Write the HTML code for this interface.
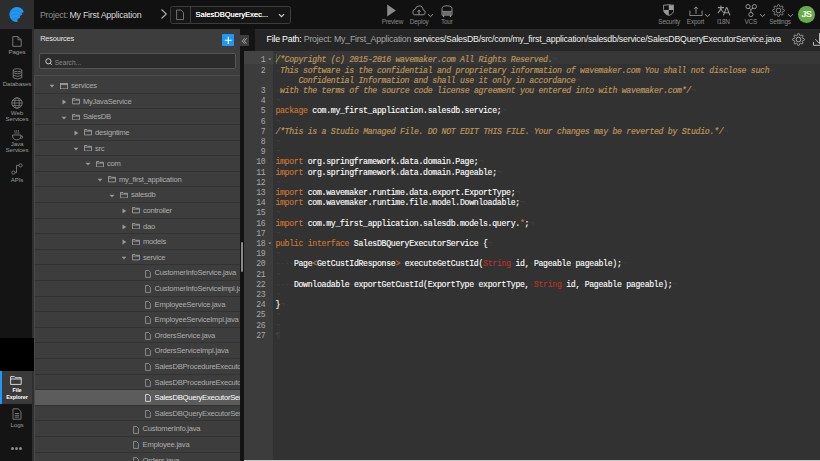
<!DOCTYPE html><html><head><meta charset="utf-8"><style>
*{margin:0;padding:0;box-sizing:border-box}
html,body{width:820px;height:461px;overflow:hidden;background:#323232;font-family:"Liberation Sans",sans-serif}
.a{position:absolute}
.t{position:absolute;white-space:pre;line-height:1}
#top{left:0;top:0;width:820px;height:28.8px;background:#111}
#logo{left:0;top:0;width:34px;height:28.8px;background:#2d2d2d}
#nav{left:0;top:28.8px;width:31.6px;height:433px;background:#141414}
#navstrip{left:31.6px;top:28.8px;width:2.7px;height:433px;background:#303030}
#panel{left:34px;top:28.8px;width:205.7px;height:433px;background:#3d3d3d}
#split{left:239.7px;top:28.8px;width:4.1px;height:433px;background:#121212}
#hdrdark{left:239.7px;top:28.8px;width:15px;height:22.2px;background:#141414}
#hdr{left:254.5px;top:28.8px;width:566px;height:22.2px;background:#262626}
#editor{left:243.8px;top:51px;width:577px;height:410px;background:#323232}
#gutter{left:243.8px;top:51px;width:29.2px;height:410px;background:#3c3c3c}
.nl{color:#9a9a9a;font-size:6.2px;letter-spacing:-0.12px;text-align:center;width:34px;left:0}
.tl{color:#8a8a8a;font-size:6.4px;letter-spacing:-0.18px}
.row{position:absolute;left:34.5px;width:205.2px;height:15.6px;border-bottom:0.8px solid #323232;overflow:hidden}
.row .tx{position:absolute;top:-0.1px;line-height:15.6px;font-size:7.6px;letter-spacing:-0.23px;color:#adadad;white-space:pre}
.row.sel{background:#5c5c5c}
.row.sel .tx{color:#fff}
.code{position:absolute;left:275.4px;-webkit-text-stroke:0.12px currentColor;font-family:"Liberation Mono",monospace;font-size:8.2px;letter-spacing:-0.3px;line-height:10.2px;white-space:pre;color:#fff}
.gn{position:absolute;white-space:pre;left:243.8px;width:21.7px;text-align:right;font-family:"Liberation Mono",monospace;font-size:8.2px;letter-spacing:-0.3px;line-height:10.2px;color:#a8a8a8}
.cm{color:#BC9458;font-style:italic;-webkit-text-stroke:0.2px #BC9458}
.kw{color:#CC7833}
.sf{color:#B83426}
.iv{color:#444;font-style:normal;-webkit-text-stroke:0}
</style></head><body>
<div id="top" class="a"></div>
<div id="logo" class="a"></div>
<div id="nav" class="a"></div>
<div id="navstrip" class="a"></div>
<div id="panel" class="a"></div>
<div id="split" class="a"></div>
<div id="hdrdark" class="a"></div>
<div id="hdr" class="a"></div>
<div id="editor" class="a"></div>
<div id="gutter" class="a"></div>
<div class="a" style="left:244px;top:460px;width:576px;height:1px;background:#c4c4c4"></div>
<svg class="a" style="left:0;top:0" width="34" height="29" viewBox="0 0 34 29">
<path d="M23.9 11.9 A7.5 7.5 0 1 0 17.4 22 L17.5 18.9 L20.3 17.4 L19.8 16 L22.4 14.6 L21.4 13.2 Z" fill="#2196f3"/>
<path d="M9.8 12.6 Q15.5 8.2 21.4 13.2" stroke="#1a84dc" stroke-width="0.8" fill="none"/>
<path d="M10.6 16.4 Q15.5 12 19.8 16" stroke="#1a84dc" stroke-width="0.8" fill="none"/>
<path d="M12.4 19.6 Q15.5 16.4 17.5 18.9" stroke="#1a84dc" stroke-width="0.8" fill="none"/>
</svg>
<div class="t" style="left:39.9px;top:10.8px;font-size:8.9px;letter-spacing:-0.25px;color:#8d8d8d">Project: <span style="color:#d6d6d6;margin-left:-0.8px">My First Application</span></div>
<svg class="a" style="left:159px;top:8px" width="10" height="12" viewBox="0 0 10 12"><path d="M2.5 1.5 L7.3 6 L2.5 10.5" stroke="#a8a8a8" stroke-width="1.2" fill="none"/></svg>
<div class="a" style="left:170.4px;top:6.3px;width:120.3px;height:17.3px;border:0.8px solid #3d3d3d;border-radius:2.5px;background:#161616"></div>
<div class="a" style="left:190px;top:6.5px;width:0.8px;height:17px;background:#3d3d3d"></div>
<svg class="a" style="left:175px;top:9px" width="10" height="12" viewBox="0 0 10 12"><path d="M1.6 1 H6 L8.5 3.5 V10.6 H1.6 Z" stroke="#8a8a8a" stroke-width="0.8" fill="none"/></svg>
<div class="t" style="left:195.5px;top:11.2px;font-size:7.5px;color:#f4f4f4;text-shadow:0.1px 0 0 #f4f4f4">SalesDBQueryExec...</div>
<svg class="a" style="left:277px;top:11.8px" width="9" height="7" viewBox="0 0 9 7"><path d="M1.9 2.1 L4.5 4.7 L7.1 2.1" stroke="#d0d0d0" stroke-width="1.15" fill="none"/></svg>
<svg class="a" style="left:386px;top:4px" width="11" height="13" viewBox="0 0 11 13"><path d="M1.2 0.6 L9.9 6.5 L1.2 12.4 Z" fill="#8a8a8a"/></svg>
<div class="t tl" style="left:377.4px;width:30px;text-align:center;top:18.5px">Preview</div>
<svg class="a" style="left:412.2px;top:4.6px" width="14" height="11" viewBox="0 0 14 11"><path d="M2.6 9.8 H11 Q13.2 9.8 13.2 7.4 Q13.2 5.2 11.2 5 Q10.8 0.9 7.1 0.9 Q4 0.9 3.3 4.1 Q0.8 4.6 0.8 7.2 Q0.8 9.8 2.6 9.8 Z" stroke="#9a9a9a" stroke-width="0.9" fill="none"/><path d="M7 9.6 V5.2 M5.5 6.6 L7 5.1 L8.5 6.6" stroke="#9a9a9a" stroke-width="1" fill="none"/></svg>
<svg class="a" style="left:427.3px;top:13.4px" width="7" height="5" viewBox="0 0 7 5"><path d="M1 1.2 L3.5 3.6 L6 1.2" stroke="#aaa" stroke-width="0.9" fill="none"/></svg>
<div class="t tl" style="left:404.2px;width:30px;text-align:center;top:18.5px">Deploy</div>
<svg class="a" style="left:440.8px;top:4.6px" width="12" height="13" viewBox="0 0 12 13"><path d="M1 10.2 V3.6 Q1 0.8 6 0.8 Q11 0.8 11 3.6 V10.2 Z" stroke="#9a9a9a" stroke-width="0.9" fill="none"/><path d="M1 6.4 H11" stroke="#9a9a9a" stroke-width="0.9"/><rect x="1.4" y="6.8" width="9.2" height="3.2" fill="#6e6e6e"/><path d="M2.6 10.2 V12 M9.4 10.2 V12" stroke="#9a9a9a" stroke-width="1.2"/></svg>
<div class="t tl" style="left:431.8px;width:30px;text-align:center;top:18.5px">Tour</div>
<svg class="a" style="left:662.5px;top:4.2px" width="11.5" height="12" viewBox="0 0 11.5 12"><path d="M5.75 0.6 Q8.6 1.3 10.9 1.1 V5.6 Q10.9 9.8 5.75 11.5 Q0.6 9.8 0.6 5.6 V1.1 Q2.9 1.3 5.75 0.6 Z" stroke="#9a9a9a" stroke-width="0.9" fill="none"/><path d="M5.75 0.8 Q8.6 1.5 10.7 1.3 V5.9 H5.75 Z" fill="#9a9a9a"/><path d="M0.8 5.9 H5.75 V11.3 Q1.2 9.6 0.8 5.9 Z" fill="#9a9a9a"/></svg>
<div class="t tl" style="left:654.2px;width:30px;text-align:center;top:18.5px">Security</div>
<svg class="a" style="left:688.6px;top:5.8px" width="14" height="10.5" viewBox="0 0 14 10.5"><path d="M0.9 4.6 V9.6 H13.1 V4.6" stroke="#9a9a9a" stroke-width="0.9" fill="none"/><path d="M7 7.8 V0.9 M5 2.9 L7 0.9 L9 2.9" stroke="#9a9a9a" stroke-width="0.9" fill="none"/></svg>
<svg class="a" style="left:704px;top:13.4px" width="7" height="5" viewBox="0 0 7 5"><path d="M1 1.2 L3.5 3.6 L6 1.2" stroke="#aaa" stroke-width="0.9" fill="none"/></svg>
<div class="t tl" style="left:680.5px;width:30px;text-align:center;top:18.5px">Export</div>
<svg class="a" style="left:716.5px;top:4.8px" width="14" height="11" viewBox="0 0 14 11"><path d="M0.8 2.6 H7 M3.9 0.6 V2.6 Q3.6 6 0.8 8.2 M3.9 3.6 Q4.8 6.2 6.8 7.6" stroke="#9a9a9a" stroke-width="1.05" fill="none"/><path d="M6.4 10.4 L9.3 2.8 H10 L13 10.4 M7.6 7.8 H11.8" stroke="#9a9a9a" stroke-width="1.05" fill="none"/></svg>
<div class="t tl" style="left:708.3px;width:30px;text-align:center;top:18.5px">I18N</div>
<svg class="a" style="left:744px;top:3.5px" width="14" height="14" viewBox="0 0 14 14"><circle cx="4" cy="2.6" r="2.1" stroke="#9a9a9a" stroke-width="0.95" fill="none"/><circle cx="10.4" cy="2.6" r="2.1" stroke="#9a9a9a" stroke-width="0.95" fill="none"/><circle cx="6.9" cy="10.5" r="2.1" stroke="#9a9a9a" stroke-width="0.95" fill="none"/><path d="M5.3 4.2 L6.9 5.6 L9.1 4.2 M6.9 5.6 V8.4" stroke="#9a9a9a" stroke-width="0.95" fill="none"/></svg>
<svg class="a" style="left:759.2px;top:13.4px" width="7" height="5" viewBox="0 0 7 5"><path d="M1 1.2 L3.5 3.6 L6 1.2" stroke="#aaa" stroke-width="0.9" fill="none"/></svg>
<div class="t tl" style="left:735.8px;width:30px;text-align:center;top:18.5px">VCS</div>
<svg class="a" style="left:772.2px;top:3.8px" width="13" height="13" viewBox="0 0 13 13"><path d="M12.40 6.50 L12.37 6.88 L12.20 7.25 L11.45 7.49 L10.70 7.63 L10.49 7.86 L10.38 8.11 L10.28 8.36 L10.27 8.68 L10.70 9.31 L11.06 10.00 L10.92 10.38 L10.67 10.67 L10.38 10.92 L10.00 11.06 L9.31 10.70 L8.68 10.27 L8.36 10.28 L8.11 10.38 L7.86 10.49 L7.63 10.70 L7.49 11.45 L7.25 12.20 L6.88 12.37 L6.50 12.40 L6.12 12.37 L5.75 12.20 L5.51 11.45 L5.37 10.70 L5.14 10.49 L4.89 10.38 L4.64 10.28 L4.32 10.27 L3.69 10.70 L3.00 11.06 L2.62 10.92 L2.33 10.67 L2.08 10.38 L1.94 10.00 L2.30 9.31 L2.73 8.68 L2.72 8.36 L2.62 8.11 L2.51 7.86 L2.30 7.63 L1.55 7.49 L0.80 7.25 L0.63 6.88 L0.60 6.50 L0.63 6.12 L0.80 5.75 L1.55 5.51 L2.30 5.37 L2.51 5.14 L2.62 4.89 L2.72 4.64 L2.73 4.32 L2.30 3.69 L1.94 3.00 L2.08 2.62 L2.33 2.33 L2.62 2.08 L3.00 1.94 L3.69 2.30 L4.32 2.73 L4.64 2.72 L4.89 2.62 L5.14 2.51 L5.37 2.30 L5.51 1.55 L5.75 0.80 L6.12 0.63 L6.50 0.60 L6.88 0.63 L7.25 0.80 L7.49 1.55 L7.63 2.30 L7.86 2.51 L8.11 2.62 L8.36 2.72 L8.68 2.73 L9.31 2.30 L10.00 1.94 L10.38 2.08 L10.67 2.33 L10.92 2.62 L11.06 3.00 L10.70 3.69 L10.27 4.32 L10.28 4.64 L10.38 4.89 L10.49 5.14 L10.70 5.37 L11.45 5.51 L12.20 5.75 L12.37 6.12Z" stroke="#9a9a9a" stroke-width="0.9" fill="none" stroke-linejoin="round"/><circle cx="6.5" cy="6.5" r="2.3" stroke="#9a9a9a" stroke-width="0.9" fill="none"/></svg>
<svg class="a" style="left:786.8px;top:13.4px" width="7" height="5" viewBox="0 0 7 5"><path d="M1 1.2 L3.5 3.6 L6 1.2" stroke="#aaa" stroke-width="0.9" fill="none"/></svg>
<div class="t tl" style="left:765.0px;width:30px;text-align:center;top:18.5px">Settings</div>
<div class="a" style="left:798.2px;top:6.3px;width:16.4px;height:16.4px;border-radius:50%;background:#66ad48"></div>
<div class="t" style="left:798.4px;top:10.35px;width:16.4px;text-align:center;font-size:8.8px;letter-spacing:-0.2px;color:#fff;text-shadow:0.15px 0 0 #fff">JS</div>
<svg class="a" style="left:12px;top:35.6px" width="10" height="11" viewBox="0 0 10 11"><path d="M0.8 0.6 H6 L9.2 3.8 V10.3 H0.8 Z M6 0.6 V3.8 H9.2" stroke="#7e7e7e" stroke-width="0.95" fill="none"/></svg>
<div class="t nl" style="top:48.599999999999994px">Pages</div>
<svg class="a" style="left:11.5px;top:67.5px" width="11" height="12" viewBox="0 0 11 12"><ellipse cx="5.5" cy="2.2" rx="4.3" ry="1.5" stroke="#7e7e7e" stroke-width="0.9" fill="none"/><path d="M1.2 2.2 V9.8 Q5.5 12.2 9.8 9.8 V2.2 M1.2 4.8 Q5.5 7 9.8 4.8 M1.2 7.3 Q5.5 9.5 9.8 7.3" stroke="#7e7e7e" stroke-width="0.9" fill="none"/></svg>
<div class="t nl" style="top:80.7px">Databases</div>
<svg class="a" style="left:11px;top:96.7px" width="12" height="12" viewBox="0 0 12 12"><circle cx="6" cy="6" r="5.2" stroke="#7e7e7e" stroke-width="0.9" fill="none"/><ellipse cx="6" cy="6" rx="2.3" ry="5.2" stroke="#7e7e7e" stroke-width="0.8" fill="none"/><path d="M0.8 6 H11.2 M1.6 3.4 H10.4 M1.6 8.6 H10.4" stroke="#7e7e7e" stroke-width="0.8"/></svg>
<div class="t nl" style="top:110.2px">Web</div>
<div class="t nl" style="top:116.1px">Services</div>
<svg class="a" style="left:10.5px;top:128.5px" width="13" height="12" viewBox="0 0 13 12"><path d="M1.5 6 H10 Q10 10.8 5.7 10.8 Q1.5 10.8 1.5 6 Z M10 7 Q12.3 7 11.6 8.6 Q11 9.4 9.3 9.2" stroke="#7e7e7e" stroke-width="0.9" fill="none"/><path d="M4 1 Q3.4 2 4 3 Q4.6 4 4 5 M5.8 1 Q5.2 2 5.8 3 Q6.4 4 5.8 5 M7.6 1 Q7 2 7.6 3 Q8.2 4 7.6 5" stroke="#7e7e7e" stroke-width="0.7" fill="none"/></svg>
<div class="t nl" style="top:141.20000000000002px">Java</div>
<div class="t nl" style="top:147.4px">Services</div>
<svg class="a" style="left:11px;top:163px" width="12" height="12" viewBox="0 0 12 12"><circle cx="9.5" cy="2.4" r="1.6" stroke="#7e7e7e" stroke-width="0.9" fill="none"/><circle cx="2.4" cy="9.6" r="1.6" stroke="#7e7e7e" stroke-width="0.9" fill="none"/><path d="M4 9.6 H5.5 V2.4 H7.9" stroke="#7e7e7e" stroke-width="0.9" fill="none"/></svg>
<div class="t nl" style="top:177.0px">APIs</div>
<div class="a" style="left:0;top:338.4px;width:34px;height:32.6px;background:#000"></div>
<div class="a" style="left:0;top:371px;width:31.6px;height:32.5px;background:#3a3a3a"></div>
<div class="a" style="left:0;top:371px;width:1.5px;height:32.5px;background:#2196f3"></div>
<svg class="a" style="left:10.2px;top:376.2px" width="12" height="9" viewBox="0 0 12 9"><path d="M0.6 0.6 H4.4 L5.3 1.7 H11.2 V8.4 H0.6 Z M0.6 3 H11.2" stroke="#e8e8e8" stroke-width="0.9" fill="none"/></svg>
<div class="t nl" style="top:388.40000000000003px;color:#fff;font-weight:bold;font-size:5.5px">File</div>
<div class="t nl" style="top:394.7px;color:#fff;font-weight:bold;font-size:5.5px">Explorer</div>
<svg class="a" style="left:12px;top:407.5px" width="10" height="12" viewBox="0 0 10 12"><path d="M1 0.8 H6.2 L9 3.6 V11.2 H1 Z M2.8 5.5 H7.2 M2.8 7.3 H7.2 M2.8 9.1 H7.2" stroke="#7e7e7e" stroke-width="0.9" fill="none"/></svg>
<div class="t nl" style="top:421.8px">Logs</div>
<div class="a" style="left:10.700000000000001px;top:446.5px;width:3.2px;height:3.2px;border-radius:50%;background:#8a8a8a"></div>
<div class="a" style="left:14.799999999999999px;top:446.5px;width:3.2px;height:3.2px;border-radius:50%;background:#8a8a8a"></div>
<div class="a" style="left:18.9px;top:446.5px;width:3.2px;height:3.2px;border-radius:50%;background:#8a8a8a"></div>
<div class="t" style="left:40.2px;top:34.6px;font-size:7.45px;letter-spacing:-0.2px;color:#e6e6e6">Resources</div>
<div class="a" style="left:221.6px;top:33.6px;width:12.5px;height:12.6px;background:#2196f3;border-radius:1px"></div>
<svg class="a" style="left:221.6px;top:33.6px" width="12.5" height="12.6" viewBox="0 0 12.5 12.6"><path d="M6.25 2.8 V9.9 M2.75 6.3 H9.75" stroke="#fff" stroke-width="1.1"/></svg>
<div class="a" style="left:39.4px;top:53.2px;width:196.2px;height:16.3px;background:#2c2c2c;border:0.8px solid #555;border-radius:2px"></div>
<svg class="a" style="left:44.6px;top:57.6px" width="8" height="8" viewBox="0 0 8 8"><circle cx="3.4" cy="3.3" r="2.6" stroke="#d8d8d8" stroke-width="0.9" fill="none"/><path d="M5.2 5.1 L6.8 6.7" stroke="#d8d8d8" stroke-width="1"/></svg>
<div class="t" style="left:54.7px;top:59.5px;font-size:6.6px;color:#888">Search...</div>
<div class="a" style="left:34px;top:75.3px;width:205.7px;height:1px;background:#4e4e4e"></div>
<div class="a" style="left:34.1px;top:75.3px;width:0.8px;height:390px;background:#4a4a4a"></div>
<div class="a" style="left:239.7px;top:35.2px;width:9.3px;height:10.7px;background:#3d3d3d"></div>
<svg class="a" style="left:241px;top:36.5px" width="7" height="8" viewBox="0 0 7 8"><path d="M3.6 1.4 L1.3 4 L3.6 6.6 M5.6 1.4 L3.3 4 L5.6 6.6" stroke="#c0c0c0" stroke-width="0.8" fill="none"/></svg>
<div class="row" style="top:78.30px">
<svg class="a" style="left:14.80px;top:6px" width="6" height="4" viewBox="0 0 6 4"><path d="M0.6 0.8 H5.4 L3 3.4 Z" fill="#9a9a9a"/></svg>
<svg class="a" style="left:25.70px;top:4.4px" width="8" height="6.5" viewBox="0 0 8 6.5"><rect x="0.45" y="0.45" width="7.1" height="5.4" stroke="#a8a8a8" stroke-width="0.8" fill="none"/><path d="M0.45 1.6 H7.55" stroke="#a8a8a8" stroke-width="0.9"/></svg>
<div class="tx" style="left:36.40px">services</div>
</div>
<div class="row" style="top:93.90px">
<svg class="a" style="left:27.50px;top:5.2px" width="5" height="6" viewBox="0 0 5 6"><path d="M0.5 0.4 V5.4 L4.3 2.9 Z" fill="#9a9a9a"/></svg>
<svg class="a" style="left:37.70px;top:4.3px" width="8" height="6.5" viewBox="0 0 8 6.5"><path d="M0.45 0.5 H3 L3.7 1.3 H7.55 V5.9 H0.45 Z M0.45 2.1 H7.55" stroke="#a8a8a8" stroke-width="0.8" fill="none"/></svg>
<div class="tx" style="left:48.40px">MyJavaService</div>
</div>
<div class="row" style="top:109.50px">
<svg class="a" style="left:26.80px;top:6px" width="6" height="4" viewBox="0 0 6 4"><path d="M0.6 0.8 H5.4 L3 3.4 Z" fill="#9a9a9a"/></svg>
<svg class="a" style="left:37.70px;top:4.3px" width="8" height="6.5" viewBox="0 0 8 6.5"><path d="M0.45 0.5 H3 L3.7 1.3 H7.55 V5.9 H0.45 Z M0.45 2.1 H7.55" stroke="#a8a8a8" stroke-width="0.8" fill="none"/></svg>
<div class="tx" style="left:48.40px">SalesDB</div>
</div>
<div class="row" style="top:125.10px">
<svg class="a" style="left:39.50px;top:5.2px" width="5" height="6" viewBox="0 0 5 6"><path d="M0.5 0.4 V5.4 L4.3 2.9 Z" fill="#9a9a9a"/></svg>
<svg class="a" style="left:49.70px;top:4.3px" width="8" height="6.5" viewBox="0 0 8 6.5"><path d="M0.45 0.5 H3 L3.7 1.3 H7.55 V5.9 H0.45 Z M0.45 2.1 H7.55" stroke="#a8a8a8" stroke-width="0.8" fill="none"/></svg>
<div class="tx" style="left:60.40px">designtime</div>
</div>
<div class="row" style="top:140.70px">
<svg class="a" style="left:38.80px;top:6px" width="6" height="4" viewBox="0 0 6 4"><path d="M0.6 0.8 H5.4 L3 3.4 Z" fill="#9a9a9a"/></svg>
<svg class="a" style="left:49.70px;top:4.3px" width="8" height="6.5" viewBox="0 0 8 6.5"><path d="M0.45 0.5 H3 L3.7 1.3 H7.55 V5.9 H0.45 Z M0.45 2.1 H7.55" stroke="#a8a8a8" stroke-width="0.8" fill="none"/></svg>
<div class="tx" style="left:60.40px">src</div>
</div>
<div class="row" style="top:156.30px">
<svg class="a" style="left:50.80px;top:6px" width="6" height="4" viewBox="0 0 6 4"><path d="M0.6 0.8 H5.4 L3 3.4 Z" fill="#9a9a9a"/></svg>
<svg class="a" style="left:61.70px;top:4.3px" width="8" height="6.5" viewBox="0 0 8 6.5"><path d="M0.45 0.5 H3 L3.7 1.3 H7.55 V5.9 H0.45 Z M0.45 2.1 H7.55" stroke="#a8a8a8" stroke-width="0.8" fill="none"/></svg>
<div class="tx" style="left:72.40px">com</div>
</div>
<div class="row" style="top:171.90px">
<svg class="a" style="left:62.80px;top:6px" width="6" height="4" viewBox="0 0 6 4"><path d="M0.6 0.8 H5.4 L3 3.4 Z" fill="#9a9a9a"/></svg>
<svg class="a" style="left:73.70px;top:4.3px" width="8" height="6.5" viewBox="0 0 8 6.5"><path d="M0.45 0.5 H3 L3.7 1.3 H7.55 V5.9 H0.45 Z M0.45 2.1 H7.55" stroke="#a8a8a8" stroke-width="0.8" fill="none"/></svg>
<div class="tx" style="left:84.40px">my_first_application</div>
</div>
<div class="row" style="top:187.50px">
<svg class="a" style="left:74.80px;top:6px" width="6" height="4" viewBox="0 0 6 4"><path d="M0.6 0.8 H5.4 L3 3.4 Z" fill="#9a9a9a"/></svg>
<svg class="a" style="left:85.70px;top:4.3px" width="8" height="6.5" viewBox="0 0 8 6.5"><path d="M0.45 0.5 H3 L3.7 1.3 H7.55 V5.9 H0.45 Z M0.45 2.1 H7.55" stroke="#a8a8a8" stroke-width="0.8" fill="none"/></svg>
<div class="tx" style="left:96.40px">salesdb</div>
</div>
<div class="row" style="top:203.10px">
<svg class="a" style="left:87.50px;top:5.2px" width="5" height="6" viewBox="0 0 5 6"><path d="M0.5 0.4 V5.4 L4.3 2.9 Z" fill="#9a9a9a"/></svg>
<svg class="a" style="left:97.70px;top:4.3px" width="8" height="6.5" viewBox="0 0 8 6.5"><path d="M0.45 0.5 H3 L3.7 1.3 H7.55 V5.9 H0.45 Z M0.45 2.1 H7.55" stroke="#a8a8a8" stroke-width="0.8" fill="none"/></svg>
<div class="tx" style="left:108.40px">controller</div>
</div>
<div class="row" style="top:218.70px">
<svg class="a" style="left:87.50px;top:5.2px" width="5" height="6" viewBox="0 0 5 6"><path d="M0.5 0.4 V5.4 L4.3 2.9 Z" fill="#9a9a9a"/></svg>
<svg class="a" style="left:97.70px;top:4.3px" width="8" height="6.5" viewBox="0 0 8 6.5"><path d="M0.45 0.5 H3 L3.7 1.3 H7.55 V5.9 H0.45 Z M0.45 2.1 H7.55" stroke="#a8a8a8" stroke-width="0.8" fill="none"/></svg>
<div class="tx" style="left:108.40px">dao</div>
</div>
<div class="row" style="top:234.30px">
<svg class="a" style="left:87.50px;top:5.2px" width="5" height="6" viewBox="0 0 5 6"><path d="M0.5 0.4 V5.4 L4.3 2.9 Z" fill="#9a9a9a"/></svg>
<svg class="a" style="left:97.70px;top:4.3px" width="8" height="6.5" viewBox="0 0 8 6.5"><path d="M0.45 0.5 H3 L3.7 1.3 H7.55 V5.9 H0.45 Z M0.45 2.1 H7.55" stroke="#a8a8a8" stroke-width="0.8" fill="none"/></svg>
<div class="tx" style="left:108.40px">models</div>
</div>
<div class="row" style="top:249.90px">
<svg class="a" style="left:86.80px;top:6px" width="6" height="4" viewBox="0 0 6 4"><path d="M0.6 0.8 H5.4 L3 3.4 Z" fill="#9a9a9a"/></svg>
<svg class="a" style="left:97.70px;top:4.3px" width="8" height="6.5" viewBox="0 0 8 6.5"><path d="M0.45 0.5 H3 L3.7 1.3 H7.55 V5.9 H0.45 Z M0.45 2.1 H7.55" stroke="#a8a8a8" stroke-width="0.8" fill="none"/></svg>
<div class="tx" style="left:108.40px">service</div>
</div>
<div class="row" style="top:265.50px">
<svg class="a" style="left:110.70px;top:4px" width="6" height="8" viewBox="0 0 6 8"><path d="M0.6 0.5 H3.6 L5.4 2.3 V7.4 H0.6 Z" stroke="#9c9c9c" stroke-width="0.8" fill="none"/></svg>
<div class="tx" style="left:120.10px">CustomerInfoService.java</div>
</div>
<div class="row" style="top:281.10px">
<svg class="a" style="left:110.70px;top:4px" width="6" height="8" viewBox="0 0 6 8"><path d="M0.6 0.5 H3.6 L5.4 2.3 V7.4 H0.6 Z" stroke="#9c9c9c" stroke-width="0.8" fill="none"/></svg>
<div class="tx" style="left:120.10px">CustomerInfoServiceImpl.java</div>
</div>
<div class="row" style="top:296.70px">
<svg class="a" style="left:110.70px;top:4px" width="6" height="8" viewBox="0 0 6 8"><path d="M0.6 0.5 H3.6 L5.4 2.3 V7.4 H0.6 Z" stroke="#9c9c9c" stroke-width="0.8" fill="none"/></svg>
<div class="tx" style="left:120.10px">EmployeeService.java</div>
</div>
<div class="row" style="top:312.30px">
<svg class="a" style="left:110.70px;top:4px" width="6" height="8" viewBox="0 0 6 8"><path d="M0.6 0.5 H3.6 L5.4 2.3 V7.4 H0.6 Z" stroke="#9c9c9c" stroke-width="0.8" fill="none"/></svg>
<div class="tx" style="left:120.10px">EmployeeServiceImpl.java</div>
</div>
<div class="row" style="top:327.90px">
<svg class="a" style="left:110.70px;top:4px" width="6" height="8" viewBox="0 0 6 8"><path d="M0.6 0.5 H3.6 L5.4 2.3 V7.4 H0.6 Z" stroke="#9c9c9c" stroke-width="0.8" fill="none"/></svg>
<div class="tx" style="left:120.10px">OrdersService.java</div>
</div>
<div class="row" style="top:343.50px">
<svg class="a" style="left:110.70px;top:4px" width="6" height="8" viewBox="0 0 6 8"><path d="M0.6 0.5 H3.6 L5.4 2.3 V7.4 H0.6 Z" stroke="#9c9c9c" stroke-width="0.8" fill="none"/></svg>
<div class="tx" style="left:120.10px">OrdersServiceImpl.java</div>
</div>
<div class="row" style="top:359.10px">
<svg class="a" style="left:110.70px;top:4px" width="6" height="8" viewBox="0 0 6 8"><path d="M0.6 0.5 H3.6 L5.4 2.3 V7.4 H0.6 Z" stroke="#9c9c9c" stroke-width="0.8" fill="none"/></svg>
<div class="tx" style="left:120.10px">SalesDBProcedureExecutorService.java</div>
</div>
<div class="row" style="top:374.70px">
<svg class="a" style="left:110.70px;top:4px" width="6" height="8" viewBox="0 0 6 8"><path d="M0.6 0.5 H3.6 L5.4 2.3 V7.4 H0.6 Z" stroke="#9c9c9c" stroke-width="0.8" fill="none"/></svg>
<div class="tx" style="left:120.10px">SalesDBProcedureExecutorServiceImpl.java</div>
</div>
<div class="row sel" style="top:390.30px">
<svg class="a" style="left:110.70px;top:4px" width="6" height="8" viewBox="0 0 6 8"><path d="M0.6 0.5 H3.6 L5.4 2.3 V7.4 H0.6 Z" stroke="#eee" stroke-width="0.8" fill="none"/></svg>
<div class="tx" style="left:120.10px">SalesDBQueryExecutorService.java</div>
</div>
<div class="row" style="top:405.90px">
<svg class="a" style="left:110.70px;top:4px" width="6" height="8" viewBox="0 0 6 8"><path d="M0.6 0.5 H3.6 L5.4 2.3 V7.4 H0.6 Z" stroke="#9c9c9c" stroke-width="0.8" fill="none"/></svg>
<div class="tx" style="left:120.10px">SalesDBQueryExecutorServiceImpl.java</div>
</div>
<div class="row" style="top:421.50px">
<svg class="a" style="left:98.70px;top:4px" width="6" height="8" viewBox="0 0 6 8"><path d="M0.6 0.5 H3.6 L5.4 2.3 V7.4 H0.6 Z" stroke="#9c9c9c" stroke-width="0.8" fill="none"/></svg>
<div class="tx" style="left:108.10px">CustomerInfo.java</div>
</div>
<div class="row" style="top:437.10px">
<svg class="a" style="left:98.70px;top:4px" width="6" height="8" viewBox="0 0 6 8"><path d="M0.6 0.5 H3.6 L5.4 2.3 V7.4 H0.6 Z" stroke="#9c9c9c" stroke-width="0.8" fill="none"/></svg>
<div class="tx" style="left:108.10px">Employee.java</div>
</div>
<div class="row" style="top:452.70px">
<svg class="a" style="left:98.70px;top:4px" width="6" height="8" viewBox="0 0 6 8"><path d="M0.6 0.5 H3.6 L5.4 2.3 V7.4 H0.6 Z" stroke="#9c9c9c" stroke-width="0.8" fill="none"/></svg>
<div class="tx" style="left:108.10px">Orders.java</div>
</div>
<div class="a" style="left:240.8px;top:241.7px;width:2.4px;height:30.6px;background:#8a8a8a;border-radius:1px"></div>
<div class="a" style="left:254.5px;top:28.6px;width:566px;height:1.2px;background:#2c2c2c"></div>
<div class="t" style="left:266.6px;top:35.3px;font-size:8.8px;letter-spacing:-0.224px;color:#eee"><span style="color:#fff">File Path:</span> <span style="color:#a5a5a5">Project: My_First_Application</span> services/SalesDB/src/com/my_first_application/salesdb/service/SalesDBQueryExecutorService.java</div>
<svg class="a" style="left:792px;top:33px" width="13" height="13" viewBox="0 0 13 13"><path d="M12.40 6.50 L12.37 6.88 L12.20 7.25 L11.45 7.49 L10.70 7.63 L10.49 7.86 L10.38 8.11 L10.28 8.36 L10.27 8.68 L10.70 9.31 L11.06 10.00 L10.92 10.38 L10.67 10.67 L10.38 10.92 L10.00 11.06 L9.31 10.70 L8.68 10.27 L8.36 10.28 L8.11 10.38 L7.86 10.49 L7.63 10.70 L7.49 11.45 L7.25 12.20 L6.88 12.37 L6.50 12.40 L6.12 12.37 L5.75 12.20 L5.51 11.45 L5.37 10.70 L5.14 10.49 L4.89 10.38 L4.64 10.28 L4.32 10.27 L3.69 10.70 L3.00 11.06 L2.62 10.92 L2.33 10.67 L2.08 10.38 L1.94 10.00 L2.30 9.31 L2.73 8.68 L2.72 8.36 L2.62 8.11 L2.51 7.86 L2.30 7.63 L1.55 7.49 L0.80 7.25 L0.63 6.88 L0.60 6.50 L0.63 6.12 L0.80 5.75 L1.55 5.51 L2.30 5.37 L2.51 5.14 L2.62 4.89 L2.72 4.64 L2.73 4.32 L2.30 3.69 L1.94 3.00 L2.08 2.62 L2.33 2.33 L2.62 2.08 L3.00 1.94 L3.69 2.30 L4.32 2.73 L4.64 2.72 L4.89 2.62 L5.14 2.51 L5.37 2.30 L5.51 1.55 L5.75 0.80 L6.12 0.63 L6.50 0.60 L6.88 0.63 L7.25 0.80 L7.49 1.55 L7.63 2.30 L7.86 2.51 L8.11 2.62 L8.36 2.72 L8.68 2.73 L9.31 2.30 L10.00 1.94 L10.38 2.08 L10.67 2.33 L10.92 2.62 L11.06 3.00 L10.70 3.69 L10.27 4.32 L10.28 4.64 L10.38 4.89 L10.49 5.14 L10.70 5.37 L11.45 5.51 L12.20 5.75 L12.37 6.12Z" stroke="#b5b5b5" stroke-width="0.9" fill="none" stroke-linejoin="round"/><circle cx="6.5" cy="6.5" r="2.3" stroke="#b5b5b5" stroke-width="0.9" fill="none"/></svg>
<svg class="a" style="left:812px;top:32px" width="15" height="15" viewBox="0 0 15 15"><path d="M7.5 1 V11.6 M3.4 7.2 L7.5 11.6 L11.6 7.2" stroke="#b8b8b8" stroke-width="1" fill="none"/><path d="M1.5 10 V13.3 H13.5 V10" stroke="#b8b8b8" stroke-width="1" fill="none"/></svg>
<div class="a" style="left:273px;top:51px;width:547px;height:12.7px;background:#373737"></div>
<div class="code" style="top:55.4px"><span class="cm">/*Copyright<span class="iv">·</span>(c)<span class="iv">·</span>2015-2016<span class="iv">·</span>wavemaker.com<span class="iv">·</span>All<span class="iv">·</span>Rights<span class="iv">·</span>Reserved.</span><span class="iv">¬</span>
<span class="cm"><span class="iv">·</span>This<span class="iv">·</span>software<span class="iv">·</span>is<span class="iv">·</span>the<span class="iv">·</span>confidential<span class="iv">·</span>and<span class="iv">·</span>proprietary<span class="iv">·</span>information<span class="iv">·</span>of<span class="iv">·</span>wavemaker.com<span class="iv">·</span>You<span class="iv">·</span>shall<span class="iv">·</span>not<span class="iv">·</span>disclose<span class="iv">·</span>such</span><span class="iv">·</span>
     <span class="cm">Confidential<span class="iv">·</span>Information<span class="iv">·</span>and<span class="iv">·</span>shall<span class="iv">·</span>use<span class="iv">·</span>it<span class="iv">·</span>only<span class="iv">·</span>in<span class="iv">·</span>accordance</span><span class="iv">¬</span>
<span class="cm"><span class="iv">·</span>with<span class="iv">·</span>the<span class="iv">·</span>terms<span class="iv">·</span>of<span class="iv">·</span>the<span class="iv">·</span>source<span class="iv">·</span>code<span class="iv">·</span>license<span class="iv">·</span>agreement<span class="iv">·</span>you<span class="iv">·</span>entered<span class="iv">·</span>into<span class="iv">·</span>with<span class="iv">·</span>wavemaker.com*/</span><span class="iv">¬</span>
<span class="iv">¬</span>
<span class="kw">package</span><span class="iv">·</span>com.my_first_application.salesdb.service;<span class="iv">¬</span>
<span class="iv">¬</span>
<span class="cm">/*This<span class="iv">·</span>is<span class="iv">·</span>a<span class="iv">·</span>Studio<span class="iv">·</span>Managed<span class="iv">·</span>File.<span class="iv">·</span>DO<span class="iv">·</span>NOT<span class="iv">·</span>EDIT<span class="iv">·</span>THIS<span class="iv">·</span>FILE.<span class="iv">·</span>Your<span class="iv">·</span>changes<span class="iv">·</span>may<span class="iv">·</span>be<span class="iv">·</span>reverted<span class="iv">·</span>by<span class="iv">·</span>Studio.*/</span><span class="iv">¬</span>
<span class="iv">¬</span>
<span class="iv">¬</span>
<span class="kw">import</span><span class="iv">·</span>org.springframework.data.domain.Page;<span class="iv">¬</span>
<span class="kw">import</span><span class="iv">·</span>org.springframework.data.domain.Pageable;<span class="iv">¬</span>
<span class="iv">¬</span>
<span class="kw">import</span><span class="iv">·</span>com.wavemaker.runtime.data.export.ExportType;<span class="iv">¬</span>
<span class="kw">import</span><span class="iv">·</span>com.wavemaker.runtime.file.model.Downloadable;<span class="iv">¬</span>
<span class="iv">¬</span>
<span class="kw">import</span><span class="iv">·</span>com.my_first_application.salesdb.models.query.<span class="kw">*</span>;<span class="iv">¬</span>
<span class="iv">¬</span>
<span class="kw">public</span><span class="iv">·</span><span class="kw">interface</span><span class="iv">·</span>SalesDBQueryExecutorService<span class="iv">·</span>{<span class="iv">¬</span>
<span class="iv">¬</span>
<span class="iv">·</span><span class="iv">·</span><span class="iv">·</span><span class="iv">·</span>Page<span class="kw">&lt;</span>GetCustIdResponse<span class="kw">&gt;</span><span class="iv">·</span>executeGetCustId(<span class="sf">String</span><span class="iv">·</span>id,<span class="iv">·</span>Pageable<span class="iv">·</span>pageable);<span class="iv">¬</span>
<span class="iv">¬</span>
<span class="iv">·</span><span class="iv">·</span><span class="iv">·</span><span class="iv">·</span>Downloadable<span class="iv">·</span>exportGetCustId(ExportType<span class="iv">·</span>exportType,<span class="iv">·</span><span class="sf">String</span><span class="iv">·</span>id,<span class="iv">·</span>Pageable<span class="iv">·</span>pageable);<span class="iv">¬</span>
<span class="iv">¬</span>
}<span class="iv">¬</span>
<span class="iv">¬</span>
<span class="iv">¬</span>
<span class="iv">¶</span></div>
<div class="a" style="left:243.8px;top:51px;width:29.2px;height:12.7px;background:#434343"></div>
<div class="gn" style="top:55.4px">1
2

3
4
5
6
7
8
9
10
11
12
13
14
15
16
17
18
19
20
21
22
23
24
25
26
27</div>
<svg class="a" style="left:267.6px;top:58.00px" width="4" height="3" viewBox="0 0 4 3"><path d="M0.3 0.4 H3.5 L1.9 2.2 Z" fill="#9a9a9a"/></svg>
<svg class="a" style="left:267.6px;top:241.60px" width="4" height="3" viewBox="0 0 4 3"><path d="M0.3 0.4 H3.5 L1.9 2.2 Z" fill="#9a9a9a"/></svg>
<div class="a" style="left:275.5px;top:54.4px;width:1px;height:9.4px;background:#91FF00;opacity:0.22"></div>
</body></html>
